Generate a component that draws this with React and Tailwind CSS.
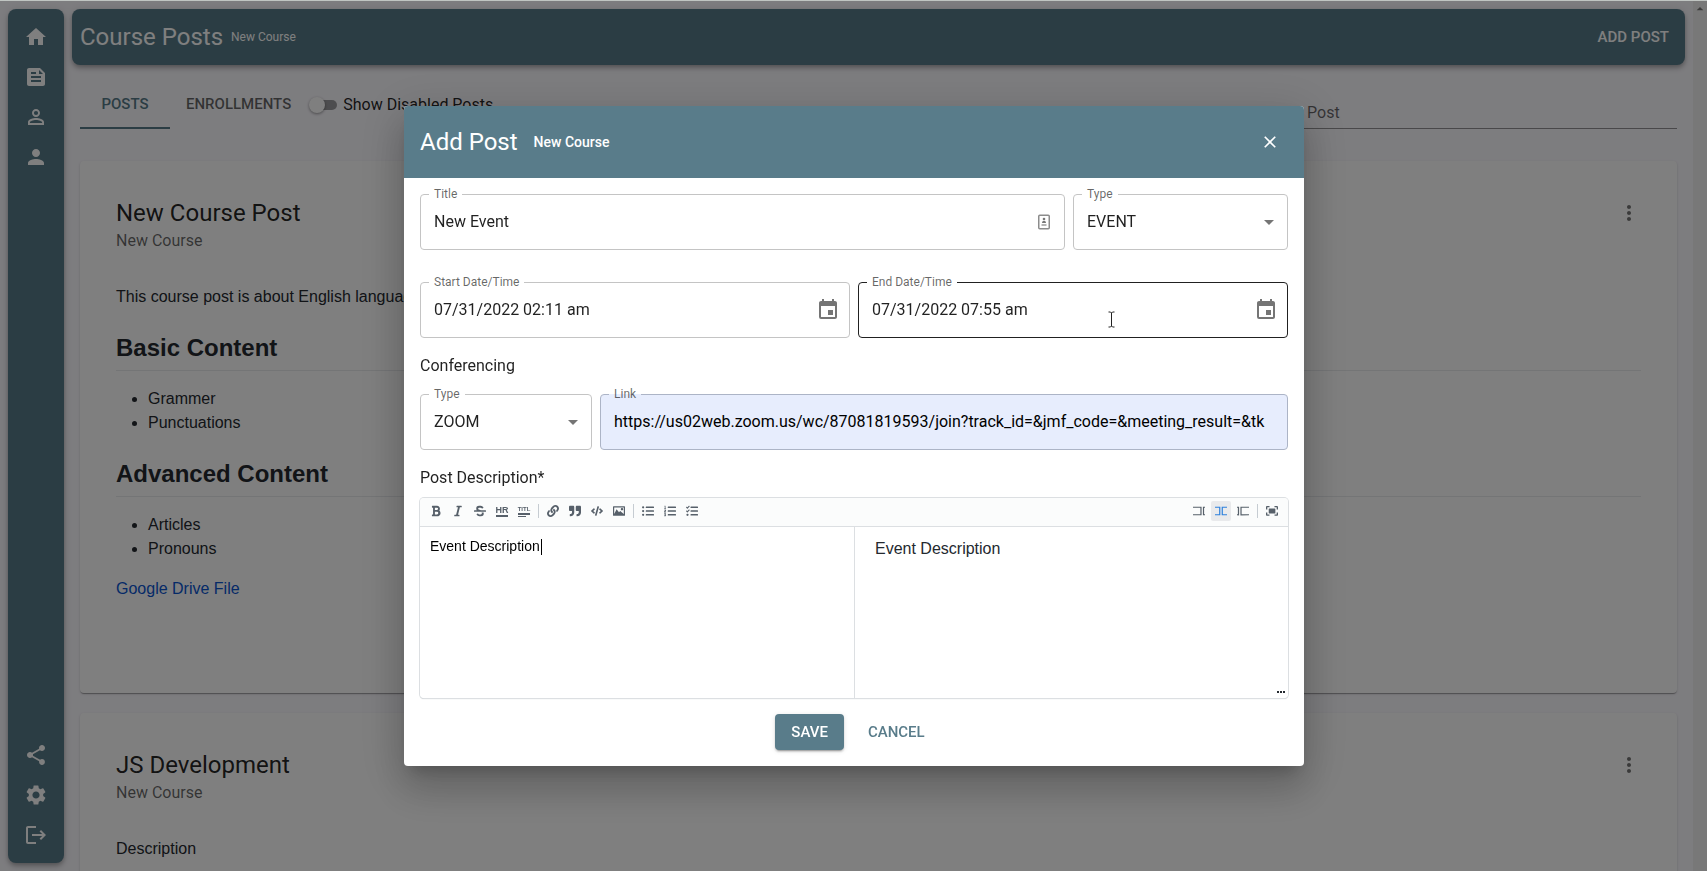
import React, { useState } from "react";
import {
  MdArrowDropDown,
  MdArrowDropUp,
  MdClose,
  MdEvent,
  MdFeed,
  MdHome,
  MdLogout,
  MdMoreVert,
  MdPerson,
  MdPersonOutline,
  MdSettings,
  MdShare,
} from "react-icons/md";
import {
  FaBold,
  FaCode,
  FaItalic,
  FaLink,
  FaListOl,
  FaListUl,
  FaQuoteRight,
  FaStrikethrough,
  FaTasks,
} from "react-icons/fa";

const topLinks = [
  { name: "Home", icon: MdHome },
  { name: "Posts", icon: MdFeed },
  { name: "Students", icon: MdPersonOutline },
  { name: "Profile", icon: MdPerson },
];

const bottomLinks = [
  { name: "Share", icon: MdShare },
  { name: "Settings", icon: MdSettings },
  { name: "Logout", icon: MdLogout },
];

const SideLink = ({ name, icon: Icon }) => (
  <a href="#" aria-label={name} className="flex h-10 items-center justify-center text-white">
    <Icon size={24} />
  </a>
);

const Sidebar = () => (
  <nav className="m-2 mr-0 flex w-14 shrink-0 flex-col justify-between rounded-lg bg-[#577b89] py-2 shadow-[0_2px_4px_-1px_rgba(0,0,0,0.2),0_4px_5px_rgba(0,0,0,0.14),0_1px_10px_rgba(0,0,0,0.12)]">
    <div>
      {topLinks.map((link) => (
        <SideLink key={link.name} {...link} />
      ))}
    </div>
    <div>
      {bottomLinks.map((link) => (
        <SideLink key={link.name} {...link} />
      ))}
    </div>
  </nav>
);

const PostCard = ({ title, course, children, className }) => (
  <article
    className={`rounded bg-white p-9 shadow-[0_2px_1px_-1px_rgba(0,0,0,0.2),0_1px_1px_rgba(0,0,0,0.14),0_1px_3px_rgba(0,0,0,0.12)] ${className}`}
  >
    <div className="flex items-start justify-between">
      <div>
        <h2 className="text-2xl leading-8 text-black/87">{title}</h2>
        <p className="text-base text-black/60">{course}</p>
      </div>
      <button aria-label="Post options" className="mt-1 text-black/54">
        <MdMoreVert size={24} />
      </button>
    </div>
    <div className="mt-8 font-['Liberation_Sans',sans-serif] text-base text-[#24292f]">{children}</div>
  </article>
);

const Section = ({ title, items }) => (
  <>
    <h3 className="mt-6 mb-4 border-b border-[#e8eaed] pb-[7px] text-2xl leading-[30px] font-bold">{title}</h3>
    <ul className="mb-4 list-disc pl-8">
      {items.map((item) => (
        <li key={item}>{item}</li>
      ))}
    </ul>
  </>
);

const Field = ({ id, label, dark, filled, children }) => (
  <div
    className={`relative flex h-14 min-w-0 items-center rounded border ${
      dark ? "border-black/87" : filled ? "border-[#acb4c6] bg-[#e7edfd]" : "border-[#c4c4c4]"
    }`}
  >
    <label
      htmlFor={id}
      className={`absolute -top-[9px] left-2 px-[5px] text-xs leading-4 text-black/60 ${
        filled ? "bg-linear-to-b from-white from-50% to-[#e7edfd] to-50%" : "bg-white"
      }`}
    >
      {label}
    </label>
    {children}
  </div>
);

const inputStyle = "h-full w-full min-w-0 bg-transparent px-[13px] text-base text-black/87 outline-none";

const SelectField = ({ id, label, options, value, onChange }) => (
  <Field id={id} label={label}>
    <select id={id} value={value} onChange={(e) => onChange(e.target.value)} className={`${inputStyle} appearance-none`}>
      {options.map((o) => (
        <option key={o}>{o}</option>
      ))}
    </select>
    <MdArrowDropDown size={24} className="pointer-events-none absolute right-1.5 text-black/54" />
  </Field>
);

const DateField = ({ id, label, dark, value, onChange, children }) => (
  <Field id={id} label={label} dark={dark}>
    <input id={id} value={value} onChange={(e) => onChange(e.target.value)} className={`${inputStyle} pb-0.5`} />
    <button type="button" aria-label={`Choose ${label}`} className="mr-[9px] text-black/54">
      <MdEvent size={24} />
    </button>
    {children}
  </Field>
);

const HrIcon = () => (
  <span className="flex w-3 flex-col items-center border-b-2 border-current text-[9px] leading-[9px] font-bold">HR</span>
);

const TitleIcon = () => (
  <span className="flex w-3 flex-col items-center gap-px text-[6px] leading-[6px] font-bold">
    TITL
    <span className="h-0.5 w-full bg-current" />
    <span className="h-px w-2 self-start bg-current" />
  </span>
);

const ImageIcon = () => (
  <svg width="12" height="12" viewBox="0 0 20 20" fill="currentColor">
    <path d="M15 9c1.1 0 2-.9 2-2s-.9-2-2-2-2 .9-2 2 .9 2 2 2zm4-7H1c-.55 0-1 .45-1 1v14c0 .55.45 1 1 1h18c.55 0 1-.45 1-1V3c0-.55-.45-1-1-1zm-1 13l-6-5-2 2-4-5-4 8V4h16v11z" />
  </svg>
);

const EditIcon = () => (
  <svg width="12" height="12" viewBox="0 0 520 520" fill="currentColor">
    <polygon points="0 71 0 122 319 122 319 397 0 397 0 449 372 449 372 71" />
    <polygon points="429 71 520 71 520 122 481 123 481 396 520 396 520 449 429 449" />
  </svg>
);

const LiveIcon = () => (
  <svg width="12" height="12" viewBox="0 0 520 520" fill="currentColor">
    <polygon points="0 71 0 122 179 122 179 397 0 397 0 449 232 449 232 71" />
    <polygon points="289 71 520 71 520 122 341 123 341 396 520 396 520 449 289 449" />
  </svg>
);

const PreviewIcon = () => (
  <svg width="12" height="12" viewBox="0 0 520 520" fill="currentColor">
    <polygon points="0 71 0 122 38 123 38 398 0 397 0 449 91 450 91 72" />
    <polygon points="148 72 520 71 520 122 200 124 200 397 520 396 520 449 148 450" />
  </svg>
);

const FullscreenIcon = () => (
  <svg width="12" height="12" viewBox="0 0 520 520" fill="currentColor">
    <path d="M118 171v171c0 12 9 23 23 23h242c12 0 23-9 23-23V171c0-12-9-23-23-23H141c-14 0-23 9-23 23zM465 413h-95v58h104c26 0 46-20 46-46V321h-58v92zM471 43H367v58h95v95h58V89c-3-26-23-46-49-46zM58 101h95V43H46C20 43 0 63 0 89v104h58zM58 321H0v104c0 26 20 46 46 46h104v-58H58z" />
  </svg>
);

const leftTools = [
  [
    { name: "Bold", icon: <FaBold /> },
    { name: "Italic", icon: <FaItalic /> },
    { name: "Strikethrough", icon: <FaStrikethrough /> },
    { name: "Horizontal rule", icon: <HrIcon /> },
    { name: "Title", icon: <TitleIcon /> },
  ],
  [
    { name: "Link", icon: <FaLink /> },
    { name: "Quote", icon: <FaQuoteRight /> },
    { name: "Code", icon: <FaCode /> },
    { name: "Image", icon: <ImageIcon /> },
  ],
  [
    { name: "Unordered list", icon: <FaListUl /> },
    { name: "Ordered list", icon: <FaListOl /> },
    { name: "Checked list", icon: <FaTasks /> },
  ],
];

const rightTools = [
  [
    { name: "Edit", icon: <EditIcon /> },
    { name: "Live", icon: <LiveIcon />, active: true },
    { name: "Preview", icon: <PreviewIcon /> },
  ],
  [{ name: "Fullscreen", icon: <FullscreenIcon /> }],
];

const ToolGroups = ({ groups }) => (
  <div className="flex items-center gap-0.5">
    {groups.map((group, i) => (
      <React.Fragment key={i}>
        {i > 0 && <span className="mx-0.5 h-3.5 w-px bg-[#c6ccd2]" />}
        {group.map((tool) => (
          <button
            key={tool.name}
            type="button"
            aria-label={tool.name}
            className={`flex size-5 items-center justify-center rounded-xs text-xs ${
              tool.active ? "bg-[#e9eaec] text-[#2f81dc]" : "text-[#57606a]"
            }`}
          >
            {tool.icon}
          </button>
        ))}
      </React.Fragment>
    ))}
  </div>
);

const MarkdownEditor = ({ value, onChange }) => (
  <div className="mt-2 rounded-sm font-['Liberation_Sans',sans-serif] shadow-[0_0_0_1px_#dcdfe2,0_1px_1px_#c4c8cc]">
    <div className="flex h-[29px] items-center justify-between rounded-t-sm border-b border-[#dcdfe2] bg-[#fbfcfc] px-1.5 pb-0.5">
      <ToolGroups groups={leftTools} />
      <ToolGroups groups={rightTools} />
    </div>
    <div className="relative grid h-[171px] grid-cols-2 rounded-b-sm bg-white">
      <div className="relative">
        <textarea
          id="description"
          value={value}
          onChange={(e) => onChange(e.target.value)}
          className="block size-full resize-none bg-transparent p-2.5 text-sm leading-[18px] text-black outline-none"
        />
        {/* text caret */}
        <span className="absolute top-3 left-[121px] h-4 w-px bg-black" />
      </div>
      <div className="border-l border-[#dcdfe2] px-5 py-2.5 text-base text-[#24292f]">{value}</div>
      <div className="absolute right-[3px] bottom-[5px] flex gap-px">
        <span className="size-0.5 bg-[#24292f]" />
        <span className="size-0.5 bg-[#24292f]" />
        <span className="size-0.5 bg-[#24292f]" />
      </div>
    </div>
  </div>
);

const AddPostDialog = () => {
  const [title, setTitle] = useState("New Event");
  const [type, setType] = useState("EVENT");
  const [start, setStart] = useState("07/31/2022 02:11 am");
  const [end, setEnd] = useState("07/31/2022 07:55 am");
  const [conference, setConference] = useState("ZOOM");
  const [link, setLink] = useState(
    "https://us02web.zoom.us/wc/87081819593/join?track_id=&jmf_code=&meeting_result=&tk"
  );
  const [description, setDescription] = useState("Event Description");

  return (
    <div
      role="dialog"
      aria-labelledby="dialog-title"
      className="w-full max-w-[900px] overflow-hidden rounded bg-white text-black/87 shadow-[0_11px_15px_-7px_rgba(0,0,0,0.2),0_24px_38px_3px_rgba(0,0,0,0.14),0_9px_46px_8px_rgba(0,0,0,0.12)]"
    >
      <div className="flex h-18 items-center bg-[#597c8a] px-4 text-white">
        <h2 id="dialog-title" className="text-2xl">Add Post</h2>
        <span className="ml-4 text-sm font-medium">New Course</span>
        <button type="button" aria-label="Close" className="ml-auto p-2">
          <MdClose size={20} />
        </button>
      </div>

      <form className="p-4" onSubmit={(e) => e.preventDefault()}>
        <div className="grid grid-cols-[3fr_1fr] gap-2">
          <Field id="title" label="Title">
            <input
              id="title"
              value={title}
              onChange={(e) => setTitle(e.target.value)}
              className={`${inputStyle} pb-0.5`}
            />
            {/* autofill badge */}
            <svg width="12" height="16" viewBox="0 0 12 16" className="mr-3.5 shrink-0" fill="none">
              <rect x="0.75" y="1.25" width="10.5" height="13.5" rx="1" stroke="#8c8c8c" strokeWidth="1.5" />
              <circle cx="6" cy="5" r="1.3" fill="#777" />
              <path d="M4 9c0-3 4-3 4 0z" fill="#777" />
              <path d="M3.5 10h5v2h-5z" fill="#b5b5b5" />
            </svg>
          </Field>
          <SelectField id="type" label="Type" options={["EVENT", "POST"]} value={type} onChange={setType} />
        </div>

        <div className="mt-8 grid grid-cols-2 gap-2">
          <DateField id="start" label="Start Date/Time" value={start} onChange={setStart} />
          <DateField id="end" label="End Date/Time" dark value={end} onChange={setEnd}>
            {/* mouse pointer */}
            <svg width="9" height="17" viewBox="0 0 9 17" className="pointer-events-none absolute top-7 left-62" fill="none">
              <path d="M1.5 1h2l1 1 1-1h2M1.5 16h2l1-1 1 1h2M4.5 2v13" stroke="#fff" strokeWidth="2.5" />
              <path d="M1.5 1h2l1 1 1-1h2M1.5 16h2l1-1 1 1h2M4.5 2v13" stroke="#222" />
            </svg>
          </DateField>
        </div>

        <h3 className="mt-4 mb-4 text-base">Conferencing</h3>
        <div className="grid grid-cols-[1fr_4fr] gap-2">
          <SelectField
            id="conference"
            label="Type"
            options={["ZOOM", "MEET"]}
            value={conference}
            onChange={setConference}
          />
          <Field id="link" label="Link" filled>
            <div className="h-full w-full px-[13px]">
              <input
                id="link"
                value={link}
                onChange={(e) => setLink(e.target.value)}
                className="h-full w-full bg-transparent pb-0.5 text-base text-black outline-none"
              />
            </div>
          </Field>
        </div>

        <label htmlFor="description" className="mt-4 block text-base">
          Post Description*
        </label>
        <MarkdownEditor value={description} onChange={setDescription} />

        <div className="mt-4 flex justify-center gap-4 font-medium">
          <button
            type="submit"
            className="h-9 rounded bg-[#597c8a] px-4 text-[15px] text-white shadow-[0_3px_1px_-2px_rgba(0,0,0,0.2),0_2px_2px_rgba(0,0,0,0.14),0_1px_5px_rgba(0,0,0,0.12)]"
          >
            SAVE
          </button>
          <button type="button" className="h-9 px-2 text-[15px] text-[#597c8a]">
            CANCEL
          </button>
        </div>
      </form>
    </div>
  );
};

const App = () => {
  const [showDisabled, setShowDisabled] = useState(false);
  const [search, setSearch] = useState("");

  return (
    <div className="flex h-screen overflow-hidden border-t border-[#c0c5c2] bg-[#fbfaff] font-['Roboto',sans-serif]">
      <Sidebar />

      <main className="min-w-0 flex-1 p-2">
        <header className="flex h-14 items-center rounded-lg bg-[#577b89] px-2 text-white shadow-[0_2px_4px_-1px_rgba(0,0,0,0.2),0_4px_5px_rgba(0,0,0,0.14),0_1px_10px_rgba(0,0,0,0.12)]">
          <h1 className="text-2xl">Course Posts</h1>
          <span className="ml-2 text-xs">New Course</span>
          <button className="ml-auto px-2 text-[15px] font-medium">ADD POST</button>
        </header>

        <div className="px-2">
          <div className="mt-4 flex h-12 items-end justify-between">
            <div className="flex h-full items-center">
              <button className="h-full min-w-[90px] border-b-2 border-[#577b89] text-[15px] font-medium text-[#577b89]">
                POSTS
              </button>
              <button className="h-full border-b-2 border-transparent px-4 text-[15px] font-medium text-black/60">
                ENROLLMENTS
              </button>
              <label className="flex cursor-pointer items-center text-base text-black/87">
                <input
                  type="checkbox"
                  className="sr-only"
                  checked={showDisabled}
                  onChange={(e) => setShowDisabled(e.target.checked)}
                />
                <span className="relative mr-1.5 ml-1.5 h-2.5 w-6 rounded-full bg-black/38">
                  <span className="absolute -top-[3px] -left-1 size-4 rounded-full bg-white shadow-[0_1px_3px_rgba(0,0,0,0.4)]" />
                </span>
                Show Disabled Posts
              </label>
            </div>
            <input
              aria-label="Search Post"
              placeholder="Search Post"
              value={search}
              onChange={(e) => setSearch(e.target.value)}
              className="h-8 w-1/4 min-w-[423px] border-b border-black/42 bg-transparent text-base outline-none placeholder:text-black/60"
            />
          </div>

          <PostCard title="New Course Post" course="New Course" className="mt-8 min-h-[532px]">
            <p>This course post is about English language.</p>
            <Section title="Basic Content" items={["Grammer", "Punctuations"]} />
            <Section title="Advanced Content" items={["Articles", "Pronouns"]} />
            <a href="#" className="text-[#0a55d0]">
              Google Drive File
            </a>
          </PostCard>

          <PostCard title="JS Development" course="New Course" className="mt-5 min-h-[532px]">
            <p>Description</p>
          </PostCard>
        </div>
      </main>

      {/* scroll track */}
      <div className="w-3.5 shrink-0 bg-[#f0f0f0] text-black/50">
        <MdArrowDropUp size={16} className="-ml-px" />
      </div>

      <div className="fixed inset-0 top-px flex items-center justify-center bg-black/50 pl-px">
        <AddPostDialog />
      </div>
    </div>
  );
};

export default App;
